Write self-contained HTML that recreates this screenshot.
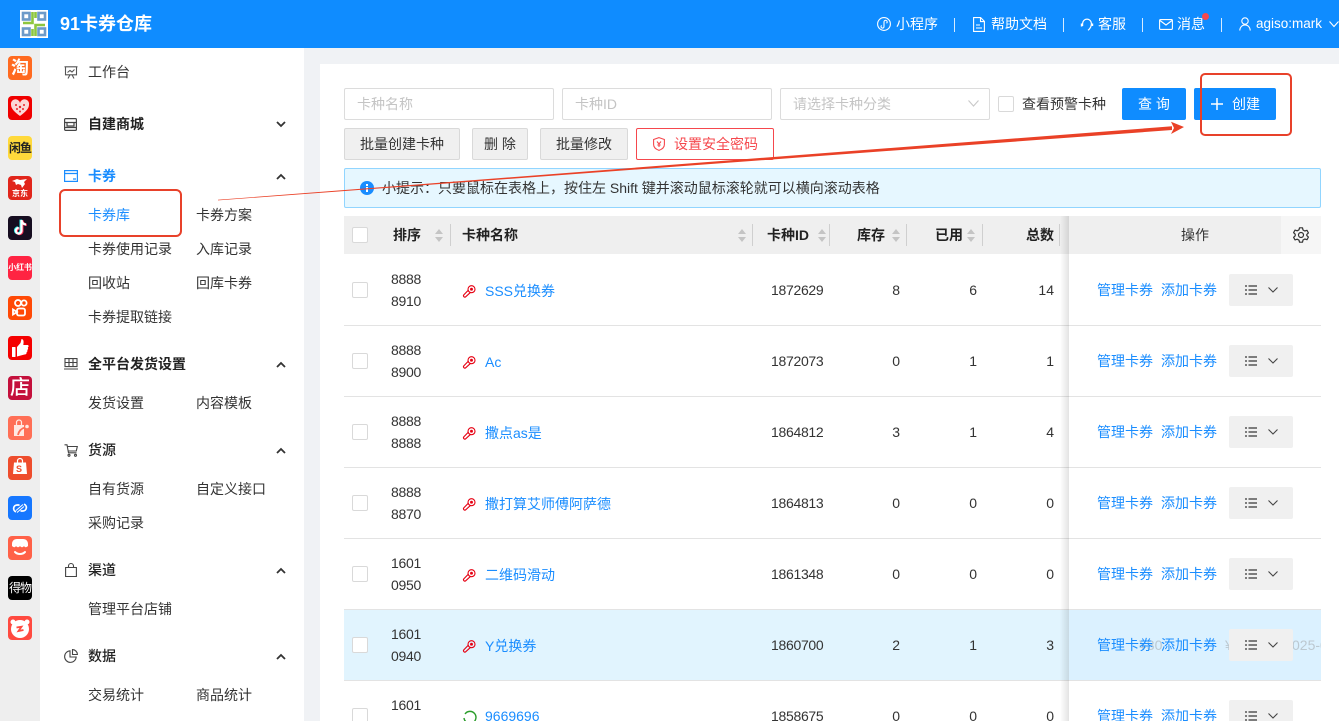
<!DOCTYPE html>
<html lang="zh"><head><meta charset="utf-8"><title>91卡券仓库</title>
<style>
*{box-sizing:border-box}
html,body{margin:0;padding:0;width:1339px;height:721px;overflow:hidden;background:#f0f2f5;font:14px/20px "Liberation Sans","Noto Sans CJK SC",sans-serif;color:#333}
body{position:relative}
.a,.t{position:absolute}.t{white-space:nowrap}
svg{position:absolute;display:block;overflow:visible}
.hd{left:0;top:0;width:1339px;height:48px;background:#0f8cff;z-index:5;color:#fff}
.hd .t{top:14px;color:#fff}.hd i{position:absolute;top:18px;width:1px;height:14px;background:#d6ebff}
.rail{left:0;top:48px;width:40px;height:673px;background:#eee}
.ic{position:absolute;left:8px;width:24px;height:24px;border-radius:4px;overflow:hidden;color:#fff;text-align:center;font-weight:700}
.side{left:40px;top:48px;width:264px;height:673px;background:#fff}
.m{color:#333}.b{font-weight:700;color:#222}.blue{color:#1a8dff}
.card{left:320px;top:64px;width:1019px;height:657px;background:#fff}
.inp{position:absolute;top:88px;height:32px;width:210px;border:1px solid #dcdcdc;border-radius:2px;background:#fff;color:#c4c4c4;padding:5px 12px}
.btn{position:absolute;top:128px;height:32px;border:1px solid #d9d9d9;border-radius:2px;background:#f0f0f0;text-align:center;line-height:30px;color:#333}
.pri{position:absolute;top:88px;height:32px;background:#0f8cff;border-radius:2px;color:#fff;text-align:center;line-height:32px}
.cb{position:absolute;width:16px;height:16px;border:1px solid #d9d9d9;border-radius:2px;background:#fff}
.th{left:344px;top:216px;width:977px;height:38px;background:#efefef}
.sep{position:absolute;top:224px;width:1px;height:22px;background:#cfcfcf;z-index:1}
.h{top:225px;font-weight:700;color:#222;z-index:1}
.r{position:absolute;left:344px;width:977px;height:71px;border-bottom:1px solid #e3e3e3;background:#fff}
.r .t{color:#333}.r .l{color:#1a8dff}
.r.hl{background:#e1f4fe}
.op{position:absolute;left:725px;top:0;width:252px;height:70px;background:#fff}
.hl .op{background:#dbf1ff}
.more{position:absolute;left:160px;top:19px;width:64px;height:32px;background:#f0f0f0;border-radius:2px}
.num{width:60px;text-align:right}
.n{letter-spacing:-.3px}
</style></head><body>

<div class="a hd">
<svg style="left:20px;top:10px" width="28" height="28" viewBox="0 0 28 28"><rect width="28" height="28" fill="#fff"/><g fill="none" stroke="#6c9ac9" stroke-width="2.600"><rect x="3" y="3" width="6.500" height="6.500"/><rect x="18.500" y="3" width="6.500" height="6.500"/><rect x="3" y="18.500" width="6.500" height="6.500"/><rect x="18.500" y="18.500" width="6.500" height="6.500"/></g><path d="M12.500 2v11H3M15.500 2v6M15.500 26V15H25M12.500 26v-7" fill="none" stroke="#8dc63f" stroke-width="2.600"/></svg>
<div class="t" style="left:60px;top:13px;font-size:18px;line-height:22px;font-weight:700">91卡券仓库</div>
<svg style="left:877px;top:17px" width="14" height="14" viewBox="0 0 14 14" fill="none" stroke="#fff" stroke-width="1.100"><circle cx="7" cy="7" r="6.400"/><path d="M4.600 8.400a1.500 1.500 0 1 0 2.400 1V5a1.600 1.600 0 1 1 2.500 1.200"/></svg>
<div class="t" style="left:896px">小程序</div><i style="left:954px"></i>
<svg style="left:973px;top:17px" width="12" height="15" viewBox="0 0 12 15" fill="none" stroke="#fff" stroke-width="1.100"><path d="M.6.600h7l3.800 3.800v10H.6zM7.500.6v4h3.900M3 8h4M3 11h6"/></svg>
<div class="t" style="left:991px">帮助文档</div><i style="left:1063px"></i>
<svg style="left:1081px;top:18px" width="12" height="13" viewBox="0 0 12 13" fill="none" stroke="#fff" stroke-width="1.200"><path d="M1.600 8V5.500a4.400 4.400 0 0 1 8.800 0c0 3-1 5-3.400 6.800"/><path d="M.6 5.500v3M11.400 5.500v2.500" stroke-width="1.600"/></svg>
<div class="t" style="left:1098px">客服</div><i style="left:1142px"></i>
<svg style="left:1159px;top:19px" width="14" height="11" viewBox="0 0 14 11" fill="none" stroke="#fff" stroke-width="1.100"><rect x=".6" y=".6" width="12.800" height="9.800" rx="1"/><path d="M1 1.500l6 4.500 6-4.500"/></svg>
<div class="t" style="left:1177px">消息</div>
<div class="a" style="left:1202px;top:13px;width:7px;height:7px;border-radius:50%;background:#f5484d"></div><i style="left:1221px"></i>
<svg style="left:1239px;top:17px" width="12" height="14" viewBox="0 0 12 14" fill="none" stroke="#fff" stroke-width="1.100"><circle cx="6" cy="4" r="3.200"/><path d="M.7 13.500c.4-3.400 2.400-5.600 5.300-5.600s4.900 2.200 5.300 5.600"/></svg>
<div class="t" style="left:1256px;font-size:13.500px">agiso:mark</div>
<svg style="left:1329px;top:21px" width="10" height="6" viewBox="0 0 10 6" fill="none" stroke="#fff" stroke-width="1.100"><path d="M.5.500L5 5.500 9.500.500"/></svg>
</div>

<div class="a rail">
<div class="ic" style="top:8px;background:#ff6a20;font-size:18px;line-height:24px">淘</div>
<div class="ic" style="top:48px;background:#f00000"><svg style="left:3px;top:4px" width="18" height="16" viewBox="0 0 18 16"><path d="M9 16C4 12 0 9 0 4.700A4.500 4.500 0 0 1 9 3a4.500 4.500 0 0 1 9 1.700C18 9 14 12 9 16z" fill="#fbd7d7"/><g fill="#e8262a"><circle cx="5" cy="5" r="1"/><circle cx="9" cy="7" r="1.200"/><circle cx="13" cy="5" r="1"/><circle cx="6" cy="9" r="1"/><circle cx="12" cy="9" r="1"/><circle cx="9" cy="11.500" r="1"/></g></svg></div>
<div class="ic" style="top:88px;background:#ffd93b;color:#222;font-size:12px;line-height:24px;letter-spacing:-1px;white-space:nowrap">闲鱼</div>
<div class="ic" style="top:128px;background:#e1251b;font-size:8px;line-height:10px"><svg style="left:4px;top:2px" width="16" height="11" viewBox="0 0 16 11"><path d="M0 3l5-2 3 1 7-1-3 3 1 2-3 4-1-3-3-1-2 1-1-3z" fill="#fff"/></svg><div style="position:absolute;left:0;right:0;top:13px">京东</div></div>
<div class="ic" style="top:168px;background:#160d20"><svg style="left:4px;top:3px" width="16" height="18" viewBox="0 0 16 18"><path d="M9.500 1v10.800a2.800 2.800 0 1 1-2.800-2.800M9.500 1c.3 2.700 2 4.300 4.500 4.500" fill="none" stroke="#25f4ee" stroke-width="2.400" transform="translate(-.8 -.4)"/><path d="M9.500 1v10.800a2.800 2.800 0 1 1-2.800-2.800M9.500 1c.3 2.700 2 4.300 4.500 4.500" fill="none" stroke="#fe2c55" stroke-width="2.400" transform="translate(.8 .4)"/><path d="M9.500 1v10.800a2.800 2.800 0 1 1-2.800-2.800M9.500 1c.3 2.700 2 4.300 4.500 4.500" fill="none" stroke="#fff" stroke-width="2.200"/></svg></div>
<div class="ic" style="top:208px;background:#ff2442;font-size:8px;line-height:24px;letter-spacing:-.2px">小红书</div>
<div class="ic" style="top:248px;background:#ff4906"><svg style="left:4px;top:3px" width="17" height="18" viewBox="0 0 17 18" fill="none" stroke="#fff" stroke-width="1.800"><circle cx="6" cy="4" r="3"/><circle cx="12" cy="4" r="2.600"/><rect x="5" y="9.500" width="8" height="7" rx="1.800"/><path d="M5 13L1 10.500v5L5 13z"/></svg></div>
<div class="ic" style="top:288px;background:#f50000"><svg style="left:3px;top:3px" width="18" height="18" viewBox="0 0 18 18" fill="#fff"><rect x="1" y="8" width="3.500" height="10" rx=".5"/><path d="M6 8l3.500-4 1-4c2 .3 2.500 2 1.800 6H17c1 1 .6 2-.2 2.500.6 1 .3 2-.5 2.500.4 1 0 2-.8 2.400.3 1.300-.5 2.100-2 2.100L6 17.500z"/></svg></div>
<div class="ic" style="top:328px;background:#c4103c;font-size:20px;line-height:24px;font-weight:500">店</div>
<div class="ic" style="top:368px;background:#ff6f56"><svg style="left:5px;top:3px" width="16" height="18" viewBox="0 0 16 18"><path d="M1 6h10v11H1z" fill="#ffe8e2"/><path d="M3.500 6V3.500a2.500 2.500 0 0 1 5 0V6" fill="none" stroke="#ffe8e2" stroke-width="1.200"/><path d="M5 16c.8-4 3-6.500 7-7.500" fill="none" stroke="#ff6f56" stroke-width="1.800"/><circle cx="14" cy="7.500" r="1.800" fill="#ffe8e2"/></svg></div>
<div class="ic" style="top:408px;background:#ee4d2d"><svg style="left:5px;top:2px" width="14" height="16" viewBox="0 0 14 16"><path d="M1 4.500h12L14 16H0z" fill="#fff"/><path d="M4.500 4.500V3a2.500 2.500 0 0 1 5 0v1.500" fill="none" stroke="#fff" stroke-width="1.200"/></svg><div style="position:absolute;left:8px;top:8px;font-size:9px;line-height:10px;color:#ee4d2d">S</div></div>
<div class="ic" style="top:448px;background:#1677ff"><svg style="left:3px;top:6px" width="18" height="12" viewBox="0 0 18 12" fill="none" stroke="#fff" stroke-width="1.700"><path d="M8.500 3H6a3.500 3.500 0 0 0-1 6.800M9.500 9H12a3.500 3.500 0 0 0 1-6.800"/><path d="M5 8.500L12 2.500M6 10.500L13 4.500" stroke-width="1"/></svg></div>
<div class="ic" style="top:488px;background:#ff6148"><svg width="24" height="24" viewBox="0 0 24 24"><path d="M4 8c0-3 2-5 5-5h6c3 0 5 2 5 5v2c-1.600 1.600-3.200 1.600-4 0-1 1.600-3 1.600-4 0-1 1.600-3 1.600-4 0-.8 1.600-2.400 1.600-4 0z" fill="#fff"/><path d="M7 16c2.600 2.700 7.400 2.700 10 0" fill="none" stroke="#fff" stroke-width="2" stroke-linecap="round"/></svg></div>
<div class="ic" style="top:528px;background:#000;font-size:12px;line-height:24px;font-weight:400;letter-spacing:-1px;white-space:nowrap">得物</div>
<div class="ic" style="top:568px;background:#ff4a40"><svg width="24" height="24" viewBox="0 0 24 24"><circle cx="5" cy="6" r="2.500" fill="#fff"/><circle cx="19" cy="6" r="2.500" fill="#fff"/><circle cx="12" cy="13" r="9" fill="#fff"/><path d="M8.500 11.500l5-.8-3 4.300 5-1" fill="none" stroke="#ff4a40" stroke-width="1.800"/></svg></div>
</div>

<div class="a side"></div>
<svg style="left:64px;top:66px" width="14" height="13" viewBox="0 0 14 13" fill="none" stroke="#555" stroke-width="1.100"><path d="M.5.800h13M1.500.8v8h11v-8M4 12.500l2-3.700M10 12.500L8 8.800M3.500 6.500l2.500-2 2 1.500 2.500-2.500"/></svg>
<div class="t m" style="left:88px;top:62px">工作台</div>
<svg style="left:64px;top:118px" width="13" height="13" viewBox="0 0 13 13" fill="none" stroke="#444" stroke-width="1.200"><rect x=".6" y=".6" width="11.800" height="11.800" rx="1"/><path d="M.6 4.500h11.800M3 4.500v3.500h7V4.500M.6 9.500h11.800"/></svg>
<div class="t b" style="left:88px;top:114px">自建商城</div>
<svg style="left:276px;top:121px" width="10" height="7" viewBox="0 0 10 7" fill="none" stroke="#333" stroke-width="1.800"><path d="M1 1l4 4 4-4"/></svg>
<svg style="left:64px;top:170px" width="14" height="12" viewBox="0 0 14 12" fill="none" stroke="#1a8dff" stroke-width="1.200"><rect x=".6" y=".6" width="12.800" height="10.800"/><path d="M.6 3.500h12.800M9 9h3"/></svg>
<div class="t blue" style="left:88px;top:166px;font-weight:700">卡券</div>
<svg style="left:276px;top:173px" width="10" height="7" viewBox="0 0 10 7" fill="none" stroke="#333" stroke-width="1.800"><path d="M1 6l4-4 4 4"/></svg>
<div class="t blue" style="left:88px;top:205px">卡券库</div><div class="t m" style="left:196px;top:205px">卡券方案</div>
<div class="t m" style="left:88px;top:239px">卡券使用记录</div><div class="t m" style="left:196px;top:239px">入库记录</div>
<div class="t m" style="left:88px;top:273px">回收站</div><div class="t m" style="left:196px;top:273px">回库卡券</div>
<div class="t m" style="left:88px;top:307px">卡券提取链接</div>
<svg style="left:64px;top:358px" width="14" height="12" viewBox="0 0 14 12" fill="none" stroke="#444" stroke-width="1.100"><path d="M1 .6h12v8H1zM1 4.500h12M5 .6v8M9 .6v8M0 11h14"/></svg>
<div class="t b" style="left:88px;top:354px">全平台发货设置</div>
<svg style="left:276px;top:361px" width="10" height="7" viewBox="0 0 10 7" fill="none" stroke="#333" stroke-width="1.800"><path d="M1 6l4-4 4 4"/></svg>
<div class="t m" style="left:88px;top:393px">发货设置</div><div class="t m" style="left:196px;top:393px">内容模板</div>
<svg style="left:64px;top:444px" width="14" height="13" viewBox="0 0 14 13" fill="none" stroke="#444" stroke-width="1.100"><path d="M.5.800h2.500l1.500 8h8M3.300 2.500h10l-1 4.500H4.200"/><circle cx="5" cy="11.300" r="1"/><circle cx="11.500" cy="11.300" r="1"/></svg>
<div class="t b" style="left:88px;top:440px;font-weight:500">货源</div>
<svg style="left:276px;top:447px" width="10" height="7" viewBox="0 0 10 7" fill="none" stroke="#333" stroke-width="1.800"><path d="M1 6l4-4 4 4"/></svg>
<div class="t m" style="left:88px;top:479px">自有货源</div><div class="t m" style="left:196px;top:479px">自定义接口</div>
<div class="t m" style="left:88px;top:513px">采购记录</div>
<svg style="left:65px;top:563px" width="12" height="14" viewBox="0 0 12 14" fill="none" stroke="#444" stroke-width="1.100"><path d="M.6 4.500h10.800v9H.6zM3.500 4.500V3a2.500 2.500 0 0 1 5 0v1.500"/></svg>
<div class="t b" style="left:88px;top:560px;font-weight:500">渠道</div>
<svg style="left:276px;top:567px" width="10" height="7" viewBox="0 0 10 7" fill="none" stroke="#333" stroke-width="1.800"><path d="M1 6l4-4 4 4"/></svg>
<div class="t m" style="left:88px;top:599px">管理平台店铺</div>
<svg style="left:64px;top:649px" width="14" height="14" viewBox="0 0 14 14" fill="none" stroke="#444" stroke-width="1.100"><path d="M6 1.800a5.800 5.800 0 1 0 6.200 6.200H6z"/><path d="M8.500.6a5 5 0 0 1 4.900 4.900H8.500z"/></svg>
<div class="t b" style="left:88px;top:646px;font-weight:500">数据</div>
<svg style="left:276px;top:653px" width="10" height="7" viewBox="0 0 10 7" fill="none" stroke="#333" stroke-width="1.800"><path d="M1 6l4-4 4 4"/></svg>
<div class="t m" style="left:88px;top:685px">交易统计</div><div class="t m" style="left:196px;top:685px">商品统计</div>

<div class="a card"></div>
<div class="inp" style="left:344px">卡种名称</div>
<div class="inp" style="left:562px">卡种ID</div>
<div class="inp" style="left:780px">请选择卡种分类</div>
<svg style="left:968px;top:100px" width="11" height="7" viewBox="0 0 11 7" fill="none" stroke="#c9c9c9" stroke-width="1.100"><path d="M.5.500l5 5.500 5-5.500"/></svg>
<div class="cb" style="left:998px;top:96px"></div>
<div class="t" style="left:1022px;top:94px">查看预警卡种</div>
<div class="pri" style="left:1122px;width:64px">查 询</div>
<div class="pri" style="left:1194px;width:82px;padding-left:22px">
<svg style="left:17px;top:10px" width="12" height="12" viewBox="0 0 12 12"><path d="M6 0v12M0 6h12" stroke="#fff" stroke-width="1.500"/></svg>创建</div>
<div class="btn" style="left:344px;width:116px">批量创建卡种</div>
<div class="btn" style="left:472px;width:56px">删 除</div>
<div class="btn" style="left:540px;width:88px">批量修改</div>
<div class="btn" style="left:636px;width:138px;background:#fff;border-color:#f5484d;color:#f5484d;padding-left:22px">设置安全密码</div>
<svg style="left:653px;top:137px" width="12" height="14" viewBox="0 0 12 14" fill="none" stroke="#f5484d" stroke-width="1.100"><path d="M6 .6l5.400 1.900v5c0 2.800-2.400 4.800-5.400 5.900C3 12.300.6 10.300.6 7.500v-5z"/><path d="M4 4.500L6 7l2-2.500M6 7v3M4.300 8h3.400"/></svg>
<div class="a" style="left:344px;top:168px;width:977px;height:40px;background:#e6f7ff;border:1px solid #91d5ff;border-radius:2px"></div>
<div class="a" style="left:360px;top:181px;width:14px;height:14px;border-radius:50%;background:#1a8dff"></div>
<div class="a" style="left:366px;top:184px;width:2px;height:2px;background:#fff"></div><div class="a" style="left:366px;top:187px;width:2px;height:5px;background:#fff"></div>
<div class="t" style="left:382px;top:178px">小提示：只要鼠标在表格上，按住左 Shift 键并滚动鼠标滚轮就可以横向滚动表格</div>

<div class="a th"></div>
<div class="cb" style="left:352px;top:227px"></div>
<div class="t h" style="left:393px">排序</div>
<div class="t h" style="left:462px">卡种名称</div>
<div class="t h" style="left:767px">卡种ID</div>
<div class="t h" style="left:857px">库存</div>
<div class="t h" style="left:935px">已用</div>
<div class="t h" style="left:1026px">总数</div>
<div class="sep" style="left:450px"></div><div class="sep" style="left:752px"></div><div class="sep" style="left:829px"></div><div class="sep" style="left:906px"></div><div class="sep" style="left:982px"></div><div class="sep" style="left:1059px"></div>
<svg style="left:435px;top:229px" width="8" height="13" viewBox="0 0 8 13" fill="#c4c4c4"><path d="M4 0l4 5H0zM4 13l4-5H0z"/></svg>
<svg style="left:738px;top:229px" width="8" height="13" viewBox="0 0 8 13" fill="#c4c4c4"><path d="M4 0l4 5H0zM4 13l4-5H0z"/></svg>
<svg style="left:818px;top:229px" width="8" height="13" viewBox="0 0 8 13" fill="#c4c4c4"><path d="M4 0l4 5H0zM4 13l4-5H0z"/></svg>
<svg style="left:892px;top:229px" width="8" height="13" viewBox="0 0 8 13" fill="#c4c4c4"><path d="M4 0l4 5H0zM4 13l4-5H0z"/></svg>
<svg style="left:967px;top:229px" width="8" height="13" viewBox="0 0 8 13" fill="#c4c4c4"><path d="M4 0l4 5H0zM4 13l4-5H0z"/></svg>
<div class="t" style="left:1181px;top:225px;z-index:1;color:#333">操作</div>
<div class="a" style="left:1281px;top:216px;width:40px;height:38px;background:#f6f6f6;z-index:1"></div>
<svg style="left:1293px;top:227px;z-index:2" width="16" height="16" viewBox="0 0 16 16" fill="none" stroke="#333" stroke-width="1.200"><circle cx="8" cy="8" r="2.500"/><path d="M6.500.8h3l.5 2.200 1.800 1 2.200-.7 1.400 2.600-1.600 1.500v1.200l1.600 1.500-1.400 2.600-2.200-.7-1.800 1-.5 2.200h-3L6 13.200l-1.800-1-2.200.7L.6 10.300l1.600-1.500V7.200L.6 5.700 2 3.100l2.200.7 1.800-1z" stroke-linejoin="round"/></svg>

<div class="r" style="top:255px"><div class="cb" style="left:8px;top:27px"></div><div class="t n" style="left:47px;top:14px">8888</div><div class="t n" style="left:47px;top:36px">8910</div>
<svg style="left:119px;top:30px" width="13" height="13" viewBox="0 0 13 13" fill="none" stroke="#e60012" stroke-width="1.100"><circle cx="8.500" cy="4.200" r="3.500"/><circle cx="8.500" cy="4.200" r=".9" fill="#e60012"/><path d="M5.500 5L.9 9.800a1.300 1.300 0 0 0 1.900 1.900L7.600 7.300"/></svg>
<div class="t l" style="left:141px;top:26px">SSS兑换券</div><div class="t n" style="left:427px;top:25px">1872629</div>
<div class="t num" style="left:496px;top:25px">8</div><div class="t num" style="left:573px;top:25px">6</div><div class="t num" style="left:650px;top:25px">14</div>
<div class="op"><div class="t l" style="left:28px;top:25px">管理卡券</div><div class="t l" style="left:92px;top:25px">添加卡券</div><div class="more"><svg style="left:16px;top:11px" width="12" height="10" viewBox="0 0 12 10" stroke="#555" stroke-width="1.400"><path d="M0 1h2M3.500 1H12M0 5h2M3.500 5H12M0 9h2M3.500 9H12"/></svg><svg style="left:39px;top:13px" width="10" height="6" viewBox="0 0 10 6" fill="none" stroke="#444" stroke-width="1.100"><path d="M.5.500L5 5 9.500.500"/></svg></div></div></div>

<div class="r" style="top:326px"><div class="cb" style="left:8px;top:27px"></div><div class="t n" style="left:47px;top:14px">8888</div><div class="t n" style="left:47px;top:36px">8900</div>
<svg style="left:119px;top:30px" width="13" height="13" viewBox="0 0 13 13" fill="none" stroke="#e60012" stroke-width="1.100"><circle cx="8.500" cy="4.200" r="3.500"/><circle cx="8.500" cy="4.200" r=".9" fill="#e60012"/><path d="M5.500 5L.9 9.800a1.300 1.300 0 0 0 1.900 1.900L7.600 7.300"/></svg>
<div class="t l" style="left:141px;top:26px">Ac</div><div class="t n" style="left:427px;top:25px">1872073</div>
<div class="t num" style="left:496px;top:25px">0</div><div class="t num" style="left:573px;top:25px">1</div><div class="t num" style="left:650px;top:25px">1</div>
<div class="op"><div class="t l" style="left:28px;top:25px">管理卡券</div><div class="t l" style="left:92px;top:25px">添加卡券</div><div class="more"><svg style="left:16px;top:11px" width="12" height="10" viewBox="0 0 12 10" stroke="#555" stroke-width="1.400"><path d="M0 1h2M3.500 1H12M0 5h2M3.500 5H12M0 9h2M3.500 9H12"/></svg><svg style="left:39px;top:13px" width="10" height="6" viewBox="0 0 10 6" fill="none" stroke="#444" stroke-width="1.100"><path d="M.5.500L5 5 9.500.500"/></svg></div></div></div>

<div class="r" style="top:397px"><div class="cb" style="left:8px;top:27px"></div><div class="t n" style="left:47px;top:14px">8888</div><div class="t n" style="left:47px;top:36px">8888</div>
<svg style="left:119px;top:30px" width="13" height="13" viewBox="0 0 13 13" fill="none" stroke="#e60012" stroke-width="1.100"><circle cx="8.500" cy="4.200" r="3.500"/><circle cx="8.500" cy="4.200" r=".9" fill="#e60012"/><path d="M5.500 5L.9 9.800a1.300 1.300 0 0 0 1.900 1.900L7.600 7.300"/></svg>
<div class="t l" style="left:141px;top:26px">撒点as是</div><div class="t n" style="left:427px;top:25px">1864812</div>
<div class="t num" style="left:496px;top:25px">3</div><div class="t num" style="left:573px;top:25px">1</div><div class="t num" style="left:650px;top:25px">4</div>
<div class="op"><div class="t l" style="left:28px;top:25px">管理卡券</div><div class="t l" style="left:92px;top:25px">添加卡券</div><div class="more"><svg style="left:16px;top:11px" width="12" height="10" viewBox="0 0 12 10" stroke="#555" stroke-width="1.400"><path d="M0 1h2M3.500 1H12M0 5h2M3.500 5H12M0 9h2M3.500 9H12"/></svg><svg style="left:39px;top:13px" width="10" height="6" viewBox="0 0 10 6" fill="none" stroke="#444" stroke-width="1.100"><path d="M.5.500L5 5 9.500.500"/></svg></div></div></div>

<div class="r" style="top:468px"><div class="cb" style="left:8px;top:27px"></div><div class="t n" style="left:47px;top:14px">8888</div><div class="t n" style="left:47px;top:36px">8870</div>
<svg style="left:119px;top:30px" width="13" height="13" viewBox="0 0 13 13" fill="none" stroke="#e60012" stroke-width="1.100"><circle cx="8.500" cy="4.200" r="3.500"/><circle cx="8.500" cy="4.200" r=".9" fill="#e60012"/><path d="M5.500 5L.9 9.800a1.300 1.300 0 0 0 1.900 1.900L7.600 7.300"/></svg>
<div class="t l" style="left:141px;top:26px">撒打算艾师傅阿萨德</div><div class="t n" style="left:427px;top:25px">1864813</div>
<div class="t num" style="left:496px;top:25px">0</div><div class="t num" style="left:573px;top:25px">0</div><div class="t num" style="left:650px;top:25px">0</div>
<div class="op"><div class="t l" style="left:28px;top:25px">管理卡券</div><div class="t l" style="left:92px;top:25px">添加卡券</div><div class="more"><svg style="left:16px;top:11px" width="12" height="10" viewBox="0 0 12 10" stroke="#555" stroke-width="1.400"><path d="M0 1h2M3.500 1H12M0 5h2M3.500 5H12M0 9h2M3.500 9H12"/></svg><svg style="left:39px;top:13px" width="10" height="6" viewBox="0 0 10 6" fill="none" stroke="#444" stroke-width="1.100"><path d="M.5.500L5 5 9.500.500"/></svg></div></div></div>

<div class="r" style="top:539px"><div class="cb" style="left:8px;top:27px"></div><div class="t n" style="left:47px;top:14px">1601</div><div class="t n" style="left:47px;top:36px">0950</div>
<svg style="left:119px;top:30px" width="13" height="13" viewBox="0 0 13 13" fill="none" stroke="#e60012" stroke-width="1.100"><circle cx="8.500" cy="4.200" r="3.500"/><circle cx="8.500" cy="4.200" r=".9" fill="#e60012"/><path d="M5.500 5L.9 9.800a1.300 1.300 0 0 0 1.900 1.900L7.600 7.300"/></svg>
<div class="t l" style="left:141px;top:26px">二维码滑动</div><div class="t n" style="left:427px;top:25px">1861348</div>
<div class="t num" style="left:496px;top:25px">0</div><div class="t num" style="left:573px;top:25px">0</div><div class="t num" style="left:650px;top:25px">0</div>
<div class="op"><div class="t l" style="left:28px;top:25px">管理卡券</div><div class="t l" style="left:92px;top:25px">添加卡券</div><div class="more"><svg style="left:16px;top:11px" width="12" height="10" viewBox="0 0 12 10" stroke="#555" stroke-width="1.400"><path d="M0 1h2M3.500 1H12M0 5h2M3.500 5H12M0 9h2M3.500 9H12"/></svg><svg style="left:39px;top:13px" width="10" height="6" viewBox="0 0 10 6" fill="none" stroke="#444" stroke-width="1.100"><path d="M.5.500L5 5 9.500.500"/></svg></div></div></div>

<div class="r hl" style="top:610px"><div class="cb" style="left:8px;top:27px"></div><div class="t n" style="left:47px;top:14px">1601</div><div class="t n" style="left:47px;top:36px">0940</div>
<svg style="left:119px;top:30px" width="13" height="13" viewBox="0 0 13 13" fill="none" stroke="#e60012" stroke-width="1.100"><circle cx="8.500" cy="4.200" r="3.500"/><circle cx="8.500" cy="4.200" r=".9" fill="#e60012"/><path d="M5.500 5L.9 9.800a1.300 1.300 0 0 0 1.900 1.900L7.600 7.300"/></svg>
<div class="t l" style="left:141px;top:26px">Y兑换券</div><div class="t n" style="left:427px;top:25px">1860700</div>
<div class="t num" style="left:496px;top:25px">2</div><div class="t num" style="left:573px;top:25px">1</div><div class="t num" style="left:650px;top:25px">3</div>
<div class="op" style="overflow:hidden"><div class="t" style="left:70px;top:25px;color:#bcc8d0">¥30</div><div class="t" style="left:156px;top:25px;color:#bcc8d0">¥</div><div class="t" style="left:223px;top:25px;color:#bcc8d0">025-0</div><div class="t l" style="left:28px;top:25px">管理卡券</div><div class="t l" style="left:92px;top:25px">添加卡券</div><div class="more"><svg style="left:16px;top:11px" width="12" height="10" viewBox="0 0 12 10" stroke="#555" stroke-width="1.400"><path d="M0 1h2M3.500 1H12M0 5h2M3.500 5H12M0 9h2M3.500 9H12"/></svg><svg style="left:39px;top:13px" width="10" height="6" viewBox="0 0 10 6" fill="none" stroke="#444" stroke-width="1.100"><path d="M.5.500L5 5 9.500.500"/></svg></div></div></div>

<div class="r" style="top:681px"><div class="cb" style="left:8px;top:27px"></div><div class="t n" style="left:47px;top:14px">1601</div>
<svg style="left:119px;top:29px" width="14" height="14" viewBox="0 0 14 14" fill="none" stroke="#2a9d2a" stroke-width="1.400"><path d="M2 4a6 6 0 1 1-1 4"/></svg>
<div class="t l" style="left:141px;top:25px">9669696</div><div class="t n" style="left:427px;top:25px">1858675</div>
<div class="t num" style="left:496px;top:25px">0</div><div class="t num" style="left:573px;top:25px">0</div><div class="t num" style="left:650px;top:25px">0</div>
<div class="op"><div class="t l" style="left:28px;top:25px">管理卡券</div><div class="t l" style="left:92px;top:25px">添加卡券</div><div class="more"><svg style="left:16px;top:11px" width="12" height="10" viewBox="0 0 12 10" stroke="#555" stroke-width="1.400"><path d="M0 1h2M3.500 1H12M0 5h2M3.500 5H12M0 9h2M3.500 9H12"/></svg><svg style="left:39px;top:13px" width="10" height="6" viewBox="0 0 10 6" fill="none" stroke="#444" stroke-width="1.100"><path d="M.5.500L5 5 9.500.500"/></svg></div></div></div>

<div class="a" style="left:1060px;top:216px;width:9px;height:505px;background:linear-gradient(90deg,rgba(0,0,0,0),rgba(0,0,0,.11));z-index:2"></div>

<svg style="left:0;top:0;z-index:6" width="1339" height="721" viewBox="0 0 1339 721">
<path d="M218 199.800L1172 126.300V130L218 200.400z" fill="#ea4127"/>
<path d="M1184 127L1171 121.700L1174 128L1171 134z" fill="#ea4127"/>
<rect x="60" y="190" width="121" height="46" rx="5" fill="none" stroke="#e8412a" stroke-width="2"/>
<rect x="1201" y="74" width="90" height="61" rx="4" fill="none" stroke="#e8412a" stroke-width="2"/>
</svg>
</body></html>
